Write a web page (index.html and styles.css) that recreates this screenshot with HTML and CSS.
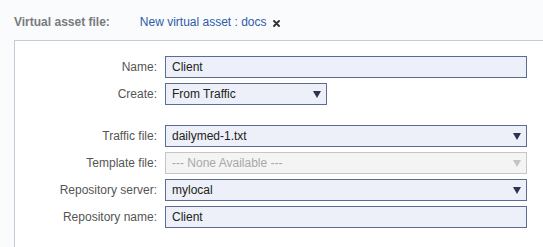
FILE: index.html
```html
<!DOCTYPE html>
<html lang="en">
<head>
<meta charset="utf-8">
<title>Virtual asset</title>
<link rel="stylesheet" href="styles.css">
</head>
<body>
<header class="head">
  <span class="head-label">Virtual asset file:</span>
  <a class="asset-link" href="#">New virtual asset : docs</a>
  <svg class="close" width="7" height="7" viewBox="0 0 7 7" aria-hidden="true">
    <path d="M1 1 L6 6 M6 1 L1 6" stroke="#333" stroke-width="1.9" stroke-linecap="round"/>
  </svg>
</header>
<section class="panel">
  <div class="form">
    <label class="lbl">Name:</label>
    <div class="field">Client</div>

    <label class="lbl">Create:</label>
    <div class="field select short">From Traffic<span class="arrow"></span></div>

    <div class="spacer"></div>

    <label class="lbl">Traffic file:</label>
    <div class="field select">dailymed-1.txt<span class="arrow"></span></div>

    <label class="lbl">Template file:</label>
    <div class="field select disabled">--- None Available ---<span class="arrow"></span></div>

    <label class="lbl">Repository server:</label>
    <div class="field select">mylocal<span class="arrow"></span></div>

    <label class="lbl">Repository name:</label>
    <div class="field">Client</div>
  </div>
</section>
</body>
</html>
```

FILE: styles.css
```css
html, body {
  margin: 0;
  padding: 0;
}
body {
  background: #fafbfc;
  font-family: "Liberation Sans", Arial, Helvetica, sans-serif;
  font-size: 12px;
  color: #222;
  height: 247px;
  overflow: hidden;
}
.head {
  display: flex;
  align-items: center;
  height: 40px;
  padding: 4px 0 0 14px;
  box-sizing: border-box;
}
.head-label {
  font-weight: bold;
  color: #777a7e;
  line-height: 14px;
}
.asset-link {
  margin-left: 30px;
  color: #2c5ca8;
  text-decoration: none;
  line-height: 14px;
}
.close {
  margin-left: 6px;
  margin-top: 2px;
}
.panel {
  margin-left: 14px;
  background: #fff;
  border-top: 1px solid #c3ccd6;
  border-left: 1px solid #c3ccd6;
  height: 207px;
  padding-top: 15px;
  box-sizing: border-box;
}
.form {
  display: grid;
  grid-template-columns: 142px 362px;
  column-gap: 8px;
  row-gap: 5px;
}
.spacer {
  grid-column: 1 / -1;
  height: 10px;
}
.lbl {
  display: flex;
  align-items: center;
  justify-content: flex-end;
  height: 22px;
  color: #555;
}
.field {
  position: relative;
  display: flex;
  align-items: center;
  box-sizing: border-box;
  height: 22px;
  padding: 0 6px;
  background: #edf0f8;
  border: 1px solid #5a6c93;
  color: #222;
}
.field.short {
  width: 162px;
}
.field.disabled {
  background: #f4f4f4;
  border-color: #c6c6c6;
  color: #a8a8a8;
}
.arrow {
  position: absolute;
  right: 5px;
  top: 7px;
  width: 0;
  height: 0;
  border-left: 4px solid transparent;
  border-right: 4px solid transparent;
  border-top: 7px solid #2b3350;
}
.field.disabled .arrow {
  border-top-color: #c4c4c4;
}
```
